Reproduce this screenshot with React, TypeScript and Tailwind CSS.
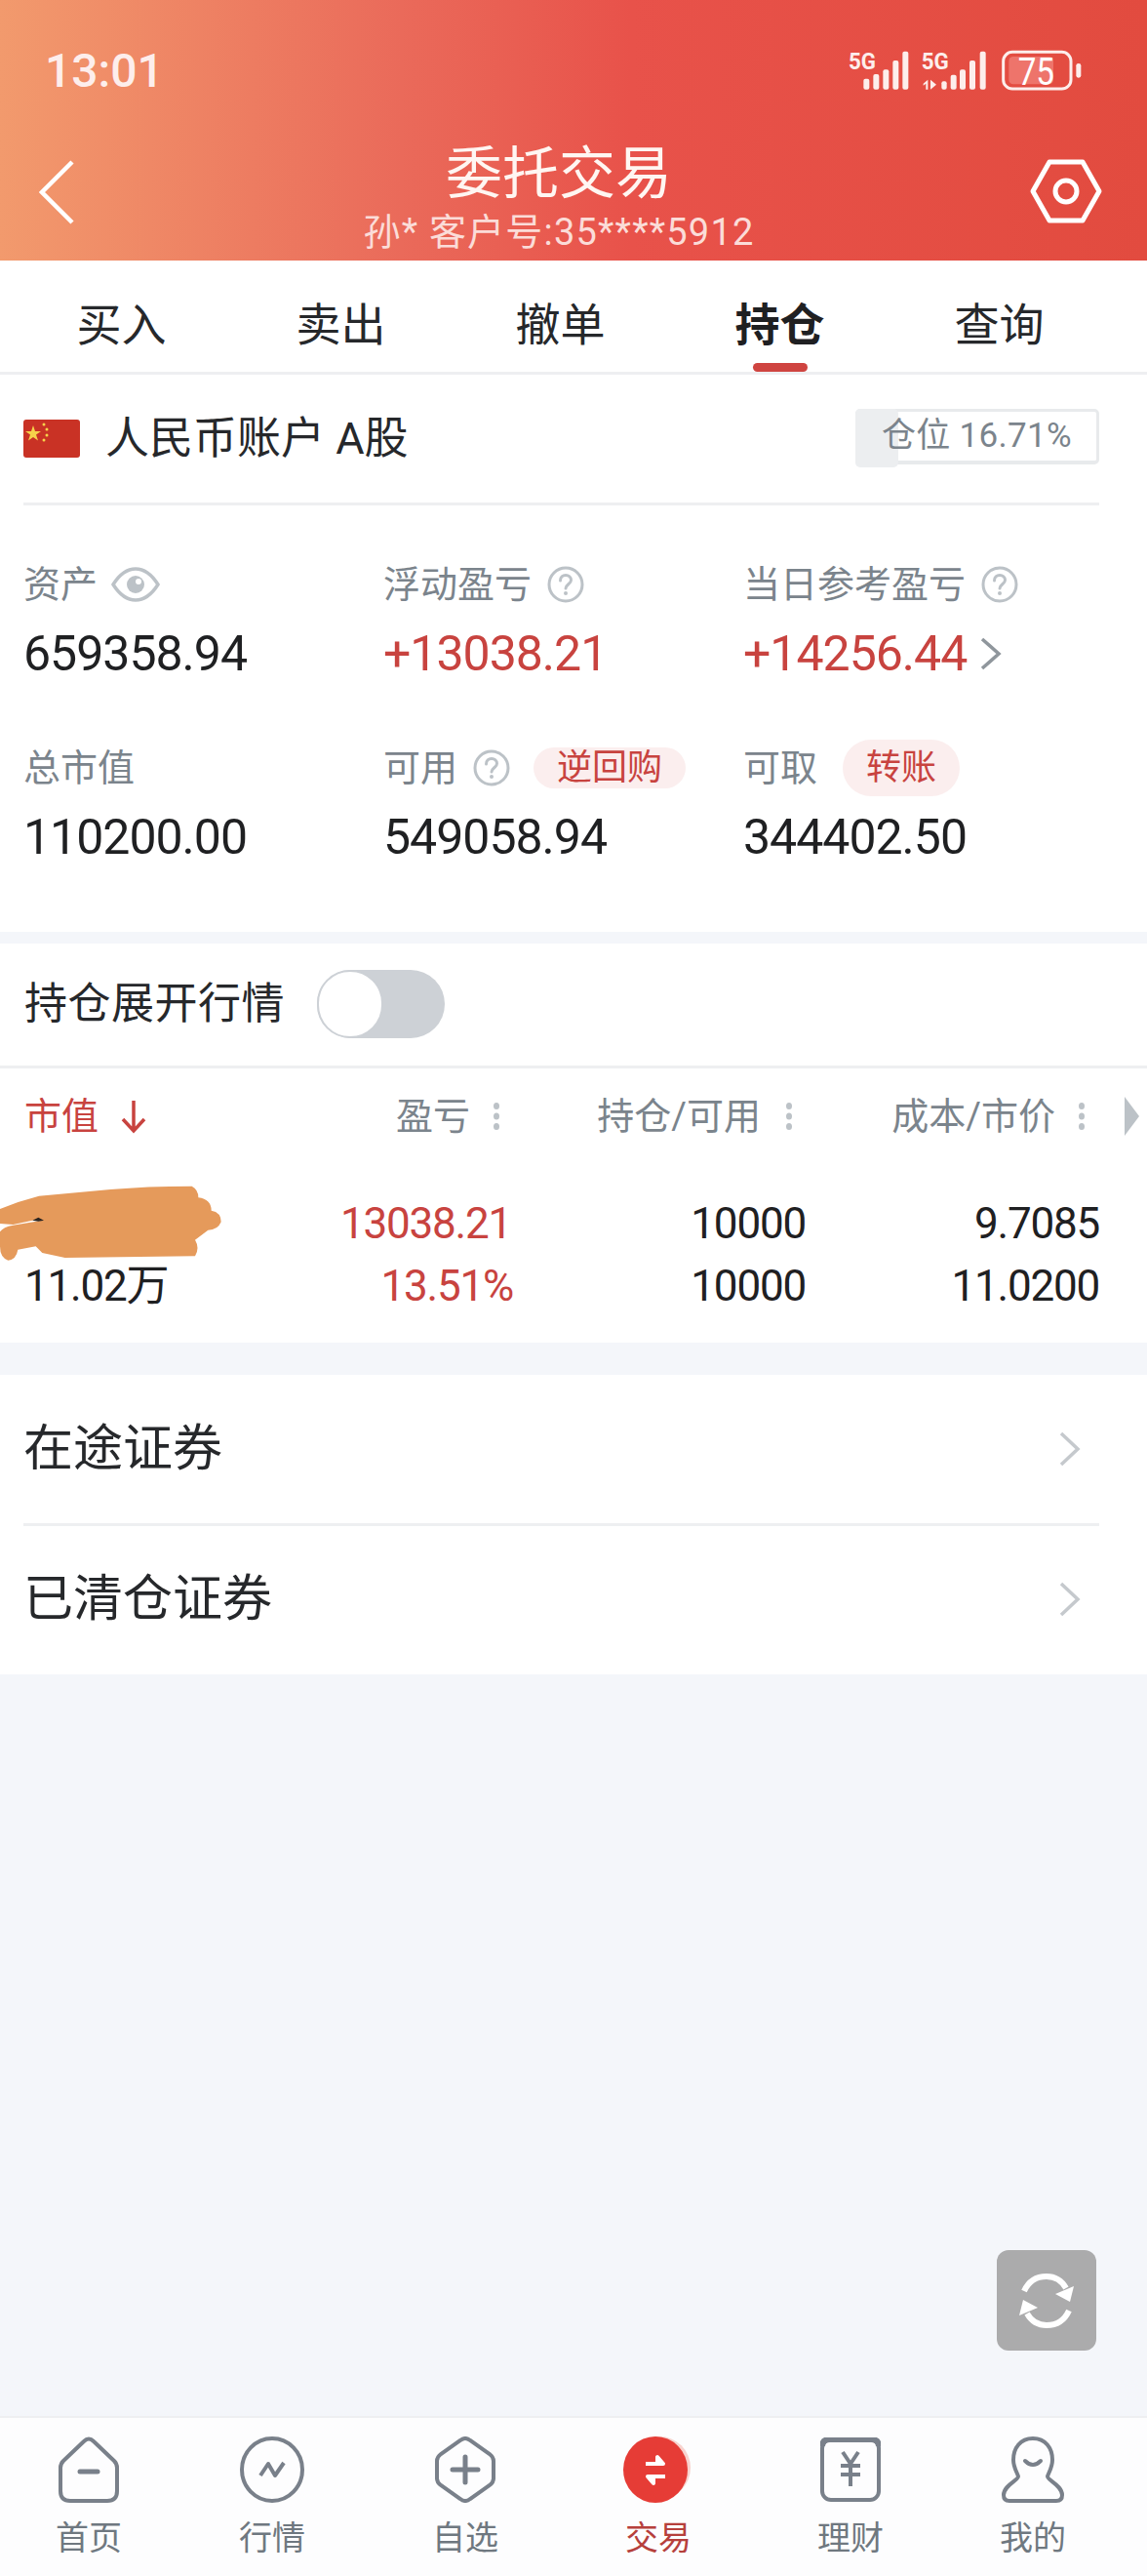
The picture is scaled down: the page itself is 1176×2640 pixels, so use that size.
import React from "react";

const Q = () => (
  <svg width="38" height="38" viewBox="0 0 38 38" fill="none" className="shrink-0">
    <circle cx="19" cy="19" r="17" stroke="#bcc2c7" strokeWidth="3" />
    <path d="M13.5 15c0-3.5 2.5-5.5 5.5-5.5s5.500 2 5.500 5c0 4-5.500 4.500-5.500 8.500" stroke="#bcc2c7" strokeWidth="3" strokeLinecap="round" />
    <circle cx="19" cy="28" r="2" fill="#bcc2c7" />
  </svg>
);

const Eye = () => (
  <svg width="50" height="36" viewBox="0 0 50 36" fill="none" className="shrink-0">
    <path d="M2 18C9 7 16 2 25 2s16 5 23 16c-7 11-14 16-23 16S9 29 2 18Z" stroke="#bcc2c7" strokeWidth="3.500" />
    <circle cx="25" cy="18" r="9" fill="#bcc2c7" />
    <circle cx="28" cy="15" r="3" fill="#fff" />
  </svg>
);

const Dots = () => (
  <svg width="8" height="28" viewBox="0 0 8 28" className="shrink-0">
    <ellipse cx="4" cy="3.500" rx="3" ry="3.500" fill="#bcc2c7" />
    <ellipse cx="4" cy="14" rx="3" ry="3.500" fill="#bcc2c7" />
    <ellipse cx="4" cy="24.500" rx="3" ry="3.500" fill="#bcc2c7" />
  </svg>
);

const Chevron = ({ w = 22, h = 36, color = "#c5c9cd", sw = 3.500 }: { w?: number; h?: number; color?: string; sw?: number }) => (
  <svg width={w} height={h} viewBox={`0 0 ${w} ${h}`} fill="none" className="shrink-0">
    <path d={`M2 2L${w - 3} ${h / 2}L2 ${h - 2}`} stroke={color} strokeWidth={sw} />
  </svg>
);

const StatusIcons = () => (
  <svg width="300" height="70" viewBox="0 0 900 210" className="shrink-0" fill="#fdeeec">
    <text x="90" y="122" fontFamily="Roboto, sans-serif" fontWeight="700" fontSize="74" textLength="84" lengthAdjust="spacingAndGlyphs">5G</text>
    <rect x="136" y="152" width="18" height="33" rx="6" />
    <rect x="166" y="138" width="18" height="47" rx="6" />
    <rect x="196" y="124" width="18" height="61" rx="6" />
    <rect x="226" y="96" width="18" height="89" rx="6" />
    <rect x="256" y="68" width="18" height="117" rx="6" />
    <text x="314" y="122" fontFamily="Roboto, sans-serif" fontWeight="700" fontSize="74" textLength="84" lengthAdjust="spacingAndGlyphs">5G</text>
    <path d="M334 155v30h-6v-18l-8 6v-6ZM342 155l18 15-18 15Z" />
    <rect x="376" y="160" width="16" height="25" rx="6" />
    <rect x="404" y="140" width="18" height="45" rx="6" />
    <rect x="432" y="124" width="18" height="61" rx="6" />
    <rect x="462" y="96" width="18" height="89" rx="6" />
    <rect x="494" y="68" width="18" height="117" rx="6" />
    <rect x="583" y="84" width="137" height="85" rx="14" fill="#ee746b" />
    <rect x="566" y="70" width="208" height="113" rx="28" fill="none" stroke="#fdeeec" strokeWidth="9" />
    <rect x="790" y="105" width="15" height="44" rx="7" />
    <text x="667" y="170" textAnchor="middle" fontFamily="Roboto, sans-serif" fontSize="118" textLength="112" lengthAdjust="spacingAndGlyphs" fill="#fff">75</text>
  </svg>
);

const stroke = "#79808a";
const NavHome = () => (
  <svg width="62" height="68" viewBox="0 0 62 68" fill="none">
    <path d="M26 5Q31 0 36 5L57 25Q60 28 60 32V56Q60 66 50 66H12Q2 66 2 56V32Q2 28 5 25Z" stroke={stroke} strokeWidth="4" />
    <path d="M22 36H40" stroke={stroke} strokeWidth="5" strokeLinecap="round" />
  </svg>
);
const NavChart = () => (
  <svg width="66" height="68" viewBox="0 0 66 68" fill="none">
    <ellipse cx="33" cy="34" rx="31" ry="32" stroke={stroke} strokeWidth="4" />
    <path d="M21 40L29 28L36 40L45 27" stroke={stroke} strokeWidth="4" strokeLinejoin="round" />
  </svg>
);
const NavPlus = () => (
  <svg width="62" height="68" viewBox="0 0 62 68" fill="none">
    <path d="M26 4Q31 0 36 4L56 18Q60 21 60 25V43Q60 47 56 50L36 64Q31 68 26 64L6 50Q2 47 2 43V25Q2 21 6 18Z" stroke={stroke} strokeWidth="4" />
    <path d="M31 21V47M18 34H44" stroke={stroke} strokeWidth="5" strokeLinecap="round" />
  </svg>
);
const NavTrade = () => (
  <svg width="74" height="68" viewBox="0 0 74 68" fill="none">
    <circle cx="38" cy="32" r="32" fill="#f4a79e" opacity="0.5" />
    <ellipse cx="34" cy="34" rx="33" ry="34" fill="#e63c36" />
    <path d="M24 28H42L36 21V26" stroke="#fff" strokeWidth="4" strokeLinejoin="round" />
    <path d="M44 41H26L32 48V43" stroke="#fff" strokeWidth="4" strokeLinejoin="round" />
  </svg>
);
const NavMoney = () => (
  <svg width="62" height="66" viewBox="0 0 62 66" fill="none">
    <rect x="2" y="2" width="58" height="62" rx="9" stroke={stroke} strokeWidth="4" />
    <path d="M2 9Q2 2 10 2H52Q60 2 60 9" stroke={stroke} strokeWidth="6" />
    <path d="M23 15L31 27L39 15M21 29H41M21 38H41M31 27V50" stroke={stroke} strokeWidth="4" />
  </svg>
);
const NavUser = () => (
  <svg width="64" height="68" viewBox="0 0 64 68" fill="none">
    <path d="M32 2C45 2 52 12 52 24C52 32 48 37 47 41C47 45 62 50 62 60Q62 66 56 66H8Q2 66 2 60C2 50 17 45 17 41C16 37 12 32 12 24C12 12 19 2 32 2Z" stroke={stroke} strokeWidth="4" />
    <path d="M24 25Q32 33 40 25" stroke={stroke} strokeWidth="4" strokeLinecap="round" />
  </svg>
);

const tabs = ["买入", "卖出", "撤单", "持仓", "查询"];
const nav: { label: string; icon: React.ReactNode; active?: boolean }[] = [
  { label: "首页", icon: <NavHome /> },
  { label: "行情", icon: <NavChart /> },
  { label: "自选", icon: <NavPlus /> },
  { label: "交易", icon: <NavTrade />, active: true },
  { label: "理财", icon: <NavMoney /> },
  { label: "我的", icon: <NavUser /> },
];

const Label = ({ children }: { children: React.ReactNode }) => (
  <span className="text-[38px] leading-[58px] text-[#7b848c]">{children}</span>
);
const Value = ({ children, red }: { children: React.ReactNode; red?: boolean }) => (
  <div className={`mt-[12px] flex h-[60px] items-center gap-[14px] text-[50px] leading-[60px] tracking-[-1px] ${red ? "text-[#c8433f]" : "text-[#1f2022]"}`}>{children}</div>
);
const Badge = ({ children }: { children: React.ReactNode }) => (
  <span className="h-[58px] rounded-full bg-[#fbeeee] px-[24px] text-[36px] leading-[58px] text-[#c8433f]">{children}</span>
);

export default function App() {
  return (
    <div className="relative flex h-[2640px] w-[1176px] flex-col overflow-hidden bg-[#f4f6fa] [font-family:Roboto,'Noto_Sans_CJK_SC',sans-serif]">
      {/* header */}
      <header className="h-[267px] shrink-0 bg-[linear-gradient(90deg,#f29a6d_0%,#ea6a5a_35%,#e8524a_55%,#e24b3f_100%)] text-white">
        <div className="flex h-[146px] items-start justify-between pr-[36px] pl-[46px]">
          <span className="mt-[45px] text-[48px] leading-[56px] font-medium text-[#fdeeec]">13:01</span>
          <div className="mt-[30px]">
            <StatusIcons />
          </div>
        </div>
        <div className="grid grid-cols-[1fr_auto_1fr] pr-[46px] pl-[40px]">
          <div className="pt-[18px]">
            <svg width="36" height="66" viewBox="0 0 36 66" fill="none">
              <path d="M34 2L3 33L34 64" stroke="#fff" strokeWidth="4.500" />
            </svg>
          </div>
          <div className="-ml-[24px] flex flex-col items-center">
            <span className="text-[58px] leading-[64px] text-[#fff6f2]">委托交易</span>
            <span className="mt-[6px] text-[38px] leading-[44px] tracking-[1.2px] text-[#fbdcd8]">孙* 客户号:35****5912</span>
          </div>
          <div className="flex justify-end pt-[17px]">
            <svg width="74" height="66" viewBox="0 0 74 66" fill="none">
              <path d="M20 3H54L71 33L54 63H20L3 33Z" stroke="#fff" strokeWidth="5" strokeLinejoin="round" />
              <circle cx="37" cy="33" r="11" stroke="#fff" strokeWidth="5" />
            </svg>
          </div>
        </div>
      </header>

      {/* tabs */}
      <nav className="grid h-[117px] shrink-0 grid-cols-5 border-b-[3px] border-[#eeeff1] bg-white pr-[39px] pl-[12px]">
        {tabs.map((t) => (
          <div key={t} className="relative flex flex-col items-center pt-[38px]">
            <span className={`text-[46px] leading-[56px] ${t === "持仓" ? "font-bold text-[#1f2022]" : "text-[#26282b]"}`}>{t}</span>
            {t === "持仓" && <span className="absolute bottom-[0px] h-[9px] w-[56px] rounded-full bg-[#cf4440]" />}
          </div>
        ))}
      </nav>

      {/* account */}
      <section className="h-[571px] shrink-0 bg-white pr-[49px] pl-[24px]">
        <div className="flex h-[134px] items-center justify-between border-b-[3px] border-[#eeeff1]">
          <div className="flex items-center gap-[26px]">
            <svg width="58" height="39" viewBox="0 0 58 39" className="shrink-0">
              <rect width="58" height="39" rx="3" fill="#c93225" />
              <path d="M10 6l2 6h6l-5 3.500 2 6-5-3.500-5 3.500 2-6-5-3.500h6Z" fill="#f6d34a" />
              <circle cx="21" cy="5" r="1.500" fill="#f6d34a" />
              <circle cx="24" cy="10" r="1.500" fill="#f6d34a" />
              <circle cx="24" cy="16" r="1.500" fill="#f6d34a" />
              <circle cx="21" cy="21" r="1.500" fill="#f6d34a" />
            </svg>
            <span className="text-[45px] leading-[56px] text-[#26282b]">人民币账户 A股</span>
          </div>
          <div className="relative -mt-[4px] flex h-[57px] w-[250px] items-center rounded-[5px] border-[3px] border-b-[4px] border-[#e8eaec] pl-[24px]">
            <span className="absolute -top-[3px] -left-[3px] h-[60px] w-[44px] rounded-[5px] bg-[#eceef0]" />
            <span className="relative text-[35px] tracking-[0.3px] whitespace-nowrap text-[#7b848c]">仓位 16.71%</span>
          </div>
        </div>
        <div className="grid grid-cols-[369px_369px_1fr] pt-[52px]">
          <div>
            <div className="flex h-[58px] items-center gap-[14px]"><Label>资产</Label><Eye /></div>
            <Value>659358.94</Value>
          </div>
          <div>
            <div className="flex h-[58px] items-center gap-[16px]"><Label>浮动盈亏</Label><Q /></div>
            <Value red>+13038.21</Value>
          </div>
          <div>
            <div className="flex h-[58px] items-center gap-[16px]"><Label>当日参考盈亏</Label><Q /></div>
            <Value red>+14256.44<Chevron w={22} h={34} color="#8f969c" sw={3.500} /></Value>
          </div>
          <div className="mt-[58px]">
            <div className="flex h-[58px] items-center"><Label>总市值</Label></div>
            <Value>110200.00</Value>
          </div>
          <div className="mt-[58px]">
            <div className="flex h-[58px] items-center gap-[16px]"><Label>可用</Label><Q /><span className="ml-[8px]"><Badge>逆回购</Badge></span></div>
            <Value>549058.94</Value>
          </div>
          <div className="mt-[58px]">
            <div className="flex h-[58px] items-center gap-[26px]"><Label>可取</Label><Badge>转账</Badge></div>
            <Value>344402.50</Value>
          </div>
        </div>
      </section>

      {/* toggle */}
      <section className="mt-[12px] shrink-0 bg-white">
        <div className="flex h-[128px] items-center gap-[33px] border-b-[3px] border-[#eeeff1] pb-[2px] pl-[25px]">
          <span className="text-[44px] leading-[56px] tracking-[0.5px] text-[#26282b]">持仓展开行情</span>
          <div className="relative h-[70px] w-[131px] rounded-full bg-[#cdd1d6]">
            <span className="absolute top-0 left-0 h-[70px] w-[68px] rounded-full border-[2px] border-[#cdd1d6] bg-white" />
          </div>
        </div>
        <div className="grid h-[96px] grid-cols-[275px_226px_300px_302px_48px] items-center pt-[2px] pl-[25px] text-[38px] leading-[50px] text-[#7b848c]">
          <div className="flex items-center gap-[22px] text-[#c8433f]">
            <span>市值</span>
            <svg width="28" height="36" viewBox="0 0 28 36" fill="none">
              <path d="M14 2V33M3 21L14 33L25 21" stroke="#c8433f" strokeWidth="3.500" />
            </svg>
          </div>
          <div className="flex items-center justify-end gap-[23px] pr-[13px]"><span>盈亏</span><Dots /></div>
          <div className="flex items-center justify-end gap-[25px] pr-[13px]"><span>持仓/可用</span><Dots /></div>
          <div className="flex items-center justify-end gap-[23px] pr-[15px]"><span>成本/市价</span><Dots /></div>
          <div className="flex justify-end pr-[8px]">
            <svg width="15" height="40" viewBox="0 0 15 40"><path d="M0 0L15 20L0 40Z" fill="#bcc2c7" /></svg>
          </div>
        </div>
        <div className="relative grid h-[185px] grid-cols-[275px_226px_300px_301px] pt-[31px] pl-[25px] text-right text-[44px] leading-[64px] tracking-[-1.2px] text-[#1f2022]">
          <div className="text-left"><div className="h-[64px]" /><div>11.02万</div></div>
          <div className="text-[#c8433f]"><div className="pr-[2px]">13038.21</div><div>13.51%</div></div>
          <div><div>10000</div><div>10000</div></div>
          <div><div>9.7085</div><div>11.0200</div></div>
          <svg width="240" height="130" viewBox="0 0 720 390" className="absolute top-[8px] left-0">
            <path d="M0 120Q60 95 120 80L340 60Q450 50 590 50Q610 60 610 85Q650 90 650 125Q680 130 680 160Q670 185 640 185L600 215Q615 240 600 265L200 270L130 255L110 235L55 245Q50 275 25 278Q0 270 0 235L0 190Q10 175 40 170L130 155L100 155L40 168L0 165Z" fill="#e59a5b" />
            <path d="M100 155L118 146L135 155L118 158Z" fill="#2a2420" />
          </svg>
        </div>
      </section>

      {/* lists */}
      <section className="mt-[33px] shrink-0 bg-white pl-[24px]">
        <div className="mr-[49px] flex h-[155px] items-center justify-between border-b-[3px] border-[#eeeff1]">
          <span className="text-[51px] leading-[60px] text-[#26282b]">在途证券</span>
          <span className="mr-[19px]"><Chevron /></span>
        </div>
        <div className="mr-[49px] flex h-[152px] items-center justify-between pb-[2px]">
          <span className="text-[51px] leading-[60px] text-[#26282b]">已清仓证券</span>
          <span className="mr-[19px]"><Chevron /></span>
        </div>
      </section>

      <div className="flex-1" />

      {/* refresh */}
      <button className="absolute top-[2306px] left-[1022px] flex h-[103px] w-[102px] items-center justify-center rounded-[12px] bg-[#ababac]">
        <svg width="60" height="56" viewBox="0 0 60 56" fill="none">
          <path d="M7 18C12 7 21 3 30 3C40 3 46 8 50 15" stroke="#fff" strokeWidth="6" />
          <path d="M58 13L54 29L39 21Z" fill="#fff" />
          <path d="M53 38C48 49 39 53 30 53C20 53 14 48 10 41" stroke="#fff" strokeWidth="6" />
          <path d="M2 43L6 27L21 35Z" fill="#fff" />
        </svg>
      </button>

      {/* bottom nav */}
      <footer className="grid h-[164px] shrink-0 grid-cols-[182px_194px_202px_194px_200px_174px] border-t-[2px] border-[#eeeff1] bg-[#fdfdfe] pt-[19px]">
        {nav.map((n) => (
          <div key={n.label} className="flex flex-col items-center">
            <div className="flex h-[68px] items-center">{n.icon}</div>
            <span className={`mt-[14px] text-[34px] leading-[44px] ${n.active ? "text-[#b6403c]" : "text-[#6f7880]"}`}>{n.label}</span>
          </div>
        ))}
      </footer>
    </div>
  );
}
